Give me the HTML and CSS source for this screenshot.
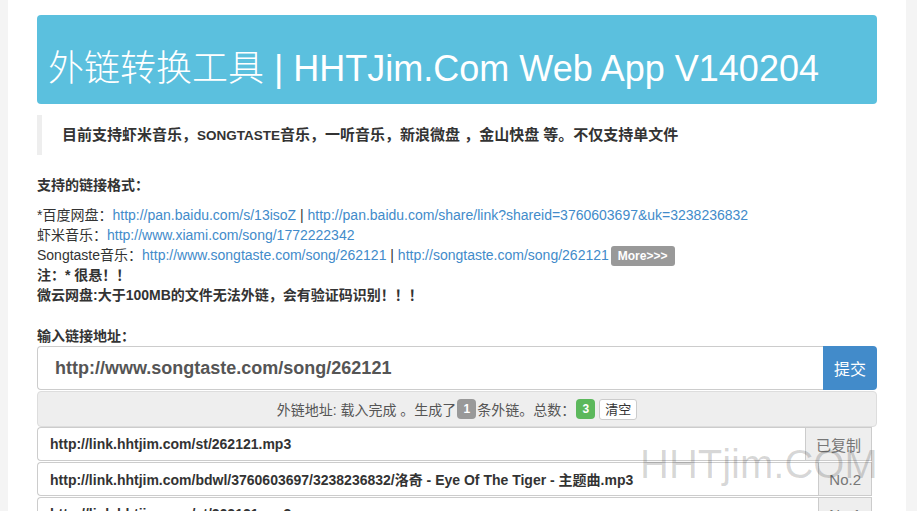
FILE: index.html
```html
<!DOCTYPE html>
<html lang="zh-CN">
<head>
<meta charset="utf-8">
<title>外链转换工具</title>
<link rel="stylesheet" href="styles.css">
</head>
<body>
<div class="page">
  <div class="jumbo"><h1><span class="cn">外链转换工具</span> | HHTJim.Com Web App V140204</h1></div>

  <blockquote class="quote">目前支持虾米音乐，<span class="en">SONGTASTE</span>音乐，一听音乐，新浪微盘 ，金山快盘 等。不仅支持单文件</blockquote>

  <h4 class="heading">支持的链接格式：</h4>
  <div class="formats">
    <div>*百度网盘：<a href="#">http://pan.baidu.com/s/13isoZ</a> | <a href="#">http://pan.baidu.com/share/link?shareid=3760603697&amp;uk=3238236832</a></div>
    <div>虾米音乐：<a href="#">http://www.xiami.com/song/1772222342</a></div>
    <div>Songtaste音乐：<a href="#">http://www.songtaste.com/song/262121</a> | <a href="#">http://songtaste.com/song/262121</a><span class="more">More&gt;&gt;&gt;</span></div>
    <div class="strong">注：* 很悬！！</div>
    <div class="strong">微云网盘:大于100MB的文件无法外链，会有验证码识别！！！</div>
  </div>

  <h4 class="heading heading-input">输入链接地址：</h4>
  <div class="input-group">
    <div class="url-input">http://www.songtaste.com/song/262121</div>
    <button class="submit">提交</button>
  </div>
  <div class="status">外链地址: 载入完成 。生成了<span class="badge grey">1</span>条外链。总数：<span class="badge green">3</span><span class="clear">清空</span></div>

  <div class="rows">
    <div class="row"><div class="row-input">http://link.hhtjim.com/st/262121.mp3</div><div class="addon">已复制</div></div>
    <div class="row"><div class="row-input">http://link.hhtjim.com/bdwl/3760603697/3238236832/洛奇 - Eye Of The Tiger - 主题曲.mp3</div><div class="addon">No.2</div></div>
    <div class="row"><div class="row-input">http://link.hhtjim.com/st/262121.mp3</div><div class="addon">No.1</div></div>
  </div>

  <div class="watermark">HHTjim.COM</div>
</div>
</body>
</html>
```

FILE: styles.css
```css
html, body {
  margin: 0;
  padding: 0;
  height: 100%;
  overflow: hidden;
}
body {
  background: #f4f4f4;
  font-family: "Liberation Sans", "Noto Sans CJK SC", sans-serif;
  font-size: 14px;
  color: #333;
}
.page {
  position: relative;
  margin-left: 8px;
  width: 898px;
  min-height: 511px;
  background: #fff;
  padding: 15px 29px 0 29px;
  box-sizing: border-box;
}
.jumbo {
  background: #5bc0de;
  border-radius: 4px;
  padding: 30px 11px 19px 11px;
}
.jumbo h1 {
  margin: 0;
  height: 40px;
  font-size: 36px;
  line-height: 40px;
  font-weight: 400;
  color: #fff;
  white-space: nowrap;
}
.jumbo .cn {
  font-family: "Noto Sans CJK SC", sans-serif;
  font-weight: 300;
}
.quote {
  margin: 11px 0 0 0;
  padding: 10px 20px;
  border-left: 5px solid #eee;
  font-size: 15px;
  font-weight: bold;
  line-height: 20px;
  height: 20px;
}
.quote .en {
  font-size: 13.5px;
}
.heading {
  margin: 20px 0 0 0;
  font-size: 14px;
  line-height: 20px;
  font-weight: bold;
}
.formats {
  margin-top: 10px;
  line-height: 20px;
  font-size: 14px;
}
.formats > div {
  height: 20px;
}
.formats a {
  color: #428bca;
  text-decoration: none;
}
.formats .strong {
  font-weight: bold;
}
.more {
  display: inline-block;
  background: #999;
  color: #fff;
  font-weight: bold;
  font-size: 12px;
  line-height: 20px;
  padding: 0 7px;
  border-radius: 3px;
  margin-left: 2px;
  vertical-align: middle;
}
.heading-input {
  margin-top: 21px;
}
.input-group {
  display: flex;
  height: 44px;
}
.url-input {
  flex: 1;
  border: 1px solid #ccc;
  border-right: none;
  border-radius: 4px 0 0 4px;
  font-size: 18px;
  font-weight: bold;
  color: #555;
  padding-left: 17px;
  display: flex;
  align-items: center;
}
.submit {
  width: 54px;
  border: none;
  background: #428bca;
  color: #fff;
  font-family: inherit;
  font-size: 16px;
  border-radius: 0 4px 4px 0;
  padding: 0;
}
.status {
  margin-top: 1px;
  height: 36px;
  box-sizing: border-box;
  background: #eee;
  border: 1px solid #ddd;
  border-radius: 4px;
  display: flex;
  align-items: center;
  justify-content: center;
  color: #555;
  font-size: 14px;
}
.badge {
  display: inline-block;
  width: 19px;
  height: 20px;
  line-height: 20px;
  text-align: center;
  color: #fff;
  font-weight: bold;
  font-size: 12px;
  border-radius: 4px;
  margin: 0 1px;
}
.badge.grey { background: #999; }
.badge.green { background: #5cb85c; margin-right: 4px; }
.clear {
  display: inline-block;
  height: 21px;
  line-height: 19px;
  box-sizing: border-box;
  padding: 0 5px;
  border: 1px solid #ccc;
  border-radius: 3px;
  background: #fff;
  color: #333;
  font-size: 13px;
}
.rows {
  width: 835px;
}
.row {
  display: flex;
  height: 34px;
  margin-bottom: 1px;
}
.row-input {
  flex: 1;
  border: 1px solid #ccc;
  border-right: none;
  border-radius: 4px 0 0 4px;
  font-size: 14px;
  font-weight: bold;
  color: #333;
  padding-left: 12px;
  display: flex;
  align-items: center;
  white-space: nowrap;
  overflow: hidden;
}
.addon {
  background: #eee;
  border: 1px solid #ccc;
  padding: 0 10px;
  font-size: 15px;
  color: #777;
  display: flex;
  align-items: center;
}
.watermark {
  position: absolute;
  left: 632px;
  top: 444px;
  font-size: 40px;
  line-height: 40px;
  color: rgba(0, 0, 0, 0.16);
  font-family: "Liberation Sans", sans-serif;
  pointer-events: none;
}
```
